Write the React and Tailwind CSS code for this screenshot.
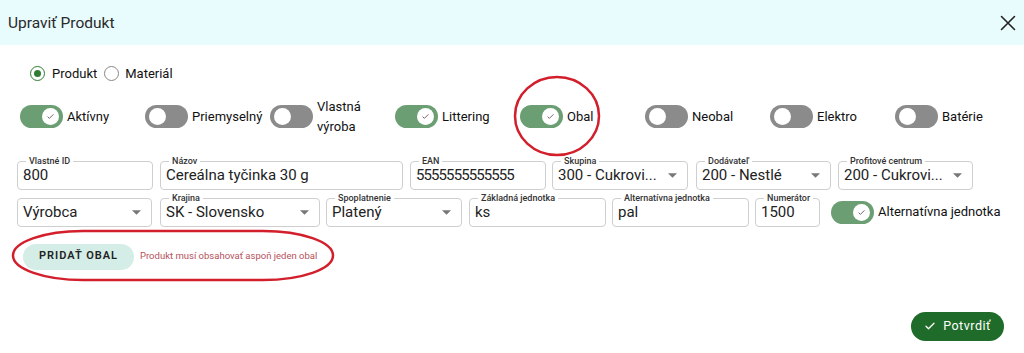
import React from "react";

const font = { fontFamily: "Roboto, 'Noto Sans', sans-serif" };

function Toggle({ on }) {
  return (
    <div
      className={`relative h-[23px] w-[43px] shrink-0 rounded-full ${on ? "bg-[#6b9f73]" : "bg-[#8b8b8b]"}`}
    >
      <div
        className={`absolute top-[3px] flex h-[17px] w-[17px] items-center justify-center rounded-full bg-white ${on ? "left-[22px]" : "left-[4px]"}`}
      >
        {on && (
          <svg width="9" height="9" viewBox="0 0 24 24" fill="none" stroke="#6b5a6a" strokeWidth="2.5" strokeLinecap="round" strokeLinejoin="round">
            <path d="M5 13l4 4L19 7" />
          </svg>
        )}
      </div>
    </div>
  );
}

function ToggleItem({ on, children }) {
  return (
    <div className="flex items-center gap-[4px]">
      <Toggle on={on} />
      <span className="text-[13px] font-normal leading-[20px] text-[#111]">{children}</span>
    </div>
  );
}

function Field({ label, value, w, select, tight }) {
  return (
    <div
      className="relative flex h-[29px] shrink-0 items-center rounded-[4px] border border-[#cfcfcf] pl-[5px] pr-[10px]"
      style={{ width: w }}
    >
      {label && (
        <span className="absolute -top-[7px] left-[8px] bg-white px-[3px] text-[9px] font-medium leading-[12px] text-[#333]">
          {label}
        </span>
      )}
      <span className={`flex-1 truncate text-[15px] leading-[18px] text-[#222] ${tight ? "tracking-[-0.06em]" : ""}`}>{value}</span>
      {select && (
        <svg width="9" height="5" viewBox="0 0 10 5" className="shrink-0">
          <path d="M0 0 L10 0 L5 5 Z" fill="#777" />
        </svg>
      )}
    </div>
  );
}

export default function App() {
  return (
    <div className="relative h-[353px] w-[1024px] overflow-hidden bg-white" style={font}>
      {/* Header */}
      <div className="flex h-[45px] items-center justify-between bg-[#e8fbfd] pl-[8px] pr-[8px]">
        <span className="text-[15.5px] leading-[20px] text-[#2a2a2a]">Upraviť Produkt</span>
        <svg width="16" height="16" viewBox="0 0 16 16" stroke="#222" strokeWidth="1.6" strokeLinecap="round">
          <path d="M1.5 1.5 L14.5 14.5 M14.5 1.5 L1.5 14.5" />
        </svg>
      </div>

      {/* Radios */}
      <div className="mt-[19px] flex items-center pl-[30px]">
        <div className="flex h-[15px] w-[15px] items-center justify-center rounded-full border-[1.5px] border-[#2e7d32]">
          <div className="h-[7px] w-[7px] rounded-full bg-[#2e7d32]" />
        </div>
        <span className="ml-[7px] text-[13px] text-[#111]">Produkt</span>
        <div className="ml-[7px] h-[15px] w-[15px] rounded-full border-[1.5px] border-[#888]" />
        <span className="ml-[6px] text-[13px] text-[#111]">Materiál</span>
      </div>

      {/* Toggles */}
      <div className="mt-[13px] grid h-[40px] grid-cols-[repeat(8,125px)] pl-[20px]">
        <ToggleItem on>Aktívny</ToggleItem>
        <ToggleItem>Priemyselný</ToggleItem>
        <ToggleItem>
          Vlastná
          <br />
          výroba
        </ToggleItem>
        <ToggleItem on>Littering</ToggleItem>
        <ToggleItem on>Obal</ToggleItem>
        <ToggleItem>Neobal</ToggleItem>
        <ToggleItem>Elektro</ToggleItem>
        <ToggleItem>Batérie</ToggleItem>
      </div>

      {/* Fields row 1 */}
      <div className="mt-[24px] flex pl-[17px]">
        <Field w={136} label="Vlastné ID" value="800" />
        <div className="w-[7px]" />
        <Field w={243} label="Názov" value="Cereálna tyčinka 30 g" />
        <div className="w-[7px]" />
        <Field w={136} label="EAN" value="5555555555555" tight />
        <div className="w-[6px]" />
        <Field w={136} label="Skupina" value="300 - Cukrovi..." select />
        <div className="w-[8px]" />
        <Field w={135} label="Dodávateľ" value="200 - Nestlé" select />
        <div className="w-[7px]" />
        <Field w={135} label="Profitové centrum" value="200 - Cukrovi..." select />
      </div>

      {/* Fields row 2 */}
      <div className="mt-[8px] flex items-center pl-[17px]">
        <Field w={135} value="Výrobca" select />
        <div className="w-[8px]" />
        <Field w={160} label="Krajina" value="SK - Slovensko" select />
        <div className="w-[6px]" />
        <Field w={136} label="Spoplatnenie" value="Platený" select />
        <div className="w-[7px]" />
        <Field w={137} label="Základná jednotka" value="ks" />
        <div className="w-[6px]" />
        <Field w={137} label="Alternatívna jednotka" value="pal" />
        <div className="w-[6px]" />
        <Field w={65} label="Numerátor" value="1500" />
        <div className="w-[11px]" />
        <Toggle on />
        <span className="ml-[4px] text-[13px] text-[#111]">Alternatívna jednotka</span>
      </div>

      {/* Add packaging */}
      <div className="mt-[17px] flex items-center pl-[23px]">
        <button className="h-[26px] w-[111px] rounded-full bg-[#d4ede7] text-[11px] font-semibold tracking-[0.09em] text-[#222]">
          PRIDAŤ OBAL
        </button>
        <span className="ml-[6px] text-[9.5px] text-[#b4525c]">Produkt musí obsahovať aspoň jeden obal</span>
      </div>

      {/* Confirm */}
      <div className="mt-[42px] flex justify-end pr-[20px]">
        <button className="flex h-[29px] w-[93px] items-center justify-center gap-[7px] rounded-full bg-[#1f6b2a] text-[12.5px] tracking-[0.04em] text-white">
          <svg width="12" height="12" viewBox="0 0 24 24" fill="none" stroke="white" strokeWidth="2.5" strokeLinecap="round" strokeLinejoin="round">
            <path d="M4 12.5l5 5L20 6.5" />
          </svg>
          Potvrdiť
        </button>
      </div>

      {/* Red annotation circles */}
      <svg className="pointer-events-none absolute left-0 top-0" width="1024" height="353">
        <ellipse cx="557" cy="116" rx="42" ry="39" fill="none" stroke="#d21f2b" strokeWidth="2.5" />
        <rect x="13" y="231" width="320" height="49" rx="70" ry="24.5" fill="none" stroke="#d21f2b" strokeWidth="2.5" />
      </svg>
    </div>
  );
}
